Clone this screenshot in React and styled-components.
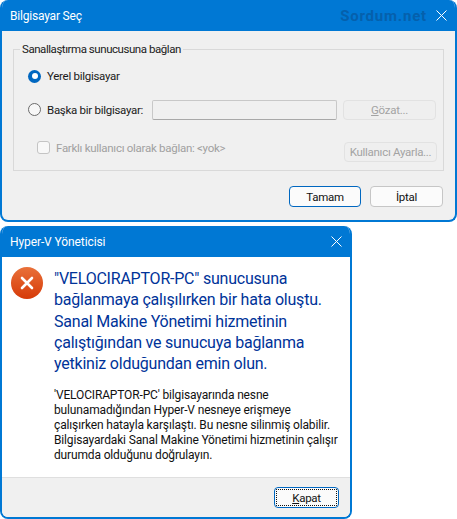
import React from "react";
import styled, { createGlobalStyle } from "styled-components";

const Global = createGlobalStyle`
  html, body { margin: 0; padding: 0; background: #fff; }
  body { font-family: Roboto, "Noto Sans", "Liberation Sans", sans-serif; font-size: 11.5px; letter-spacing: -.28px; }
`;
const Page = styled.div`display:flex;flex-direction:column;align-items:flex-start;width:457px;height:519px;overflow:hidden;`;
const Win = styled.div`
  box-sizing:border-box;width:${p=>p.$w}px;height:${p=>p.$h}px;margin-top:${p=>p.$mt||0}px;
  border:2px solid #0078d4;border-top:0;border-radius:8px 8px 8px 8px;background:${p=>p.$bg||"#f0f0f0"};
  display:flex;flex-direction:column;overflow:hidden;
`;
const Title = styled.div`
  height:31px;flex:none;margin:0 -2px;background:#0078d4;color:#fff;display:flex;align-items:center;
  padding:0 10px;font-size:12px;letter-spacing:${p=>p.$ls}px;
`;
const TitleText = styled.span`flex:1;`;
const Mark = styled.span`font-weight:700;font-size:15px;color:#0560ac;letter-spacing:.8px;margin-right:9px;`;
const Close = styled.svg`width:11px;height:11px;stroke:#fff;stroke-width:1;fill:none;flex:none;`;
const Body1 = styled.div`flex:1;display:flex;flex-direction:column;padding:11px 11px 0 11px;`;
const Group = styled.fieldset`
  box-sizing:border-box;margin:0;padding:0;height:129px;border:1px solid #d9d9d9;position:relative;display:block;
  min-width:0;
`;
const Legend = styled.legend`
  padding:0 2px;margin-left:6px;font-size:11.5px;letter-spacing:-.45px;color:#1a1a1a;line-height:14px;
`;
const Row = styled.div`display:flex;align-items:center;height:${p=>p.$h}px;padding-left:${p=>p.$pl}px;padding-right:6px;margin-top:${p=>p.$mt||0}px;color:${p=>p.$off?"#a0a0a0":"#1a1a1a"};`;
const Radio = styled.span`
  box-sizing:border-box;width:13px;height:13px;border-radius:50%;flex:none;margin-right:6px;display:flex;align-items:center;justify-content:center;
  background:${p=>p.$on?"#0067c0":"#f7f7f7"};border:${p=>p.$on?"0":"1px solid #6b6b6b"};
  &::after{content:"";display:${p=>p.$on?"block":"none"};width:6px;height:6px;border-radius:50%;background:#fff;}
`;
const Check = styled.span`box-sizing:border-box;width:13px;height:13px;border:1px solid #c4c4c4;border-radius:3px;background:#f8f8f8;flex:none;margin-right:6px;`;
const Label = styled.span`flex:${p=>p.$grow?1:"none"};width:${p=>p.$w?p.$w+"px":"auto"};white-space:nowrap;`;
const Field = styled.span`box-sizing:border-box;width:185px;height:20px;border:1px solid #c8c8c8;border-bottom-color:#a8a8a8;border-radius:2px;background:#f0f0f0;flex:none;margin-right:6px;`;
const Btn = styled.span`
  box-sizing:border-box;display:flex;align-items:center;justify-content:center;flex:none;width:${p=>p.$w}px;height:${p=>p.$h||21}px;
  border-radius:4px;
  color:${p=>p.$off?"#a3a3a3":"#111"};background:${p=>p.$off?"#efefef":"#fbfbfb"};
  border:1px solid ${p=>p.$off?"#e2e2e2":p.$pri?"#0067c0":"#c6c6c6"};
  ${p=>p.$pri?"border-width:1.5px;":""}
`;
const LowBtn = styled(Btn)`margin-top:8px;`;
const Foot = styled.div`display:flex;justify-content:flex-end;gap:9px;padding:15px 1px 0 0;`;
const Content = styled.div`flex:1;background:#fff;display:flex;padding:11px 14px 0 9px;`;
const ErrIcon = styled.svg`width:32px;height:32px;flex:none;margin:-1px 11px 0 0;`;
const Texts = styled.div`display:flex;flex-direction:column;`;
const Heading = styled.div`color:#003399;font-size:16px;letter-spacing:-.22px;line-height:21.3px;white-space:pre;`;
const Detail = styled.div`color:#111;font-size:12px;letter-spacing:-.15px;line-height:15px;white-space:pre;margin-top:14px;`;
const Bar = styled.div`box-sizing:border-box;height:40px;flex:none;background:#f0f0f0;border-top:1px solid #dfdfdf;display:flex;justify-content:flex-end;padding:9px 11px 0 0;`;
const FocusBtn = styled(Btn)`
  position:relative;border:1.5px solid #0067c0;
  &::after{content:"";position:absolute;inset:1px;border:1px dotted #111;border-radius:1px;}
`;

const X = () => <Close viewBox="0 0 11 11"><path d="M.5.5l10 10M10.5.5l-10 10"/></Close>;

export default function App() {
  return (
    <Page>
      <Global/>
      <Win $w={457} $h={222}>
        <Title $ls={-0.2}><TitleText>Bilgisayar Seç</TitleText><Mark>Sordum.net</Mark><X/></Title>
        <Body1>
          <Group>
            <Legend>Sanallaştırma sunucusuna bağlan</Legend>
            <Row $h={20} $pl={14} $mt={10}><Radio $on/><Label>Yerel bilgisayar</Label></Row>
            <Row $h={21} $pl={14} $mt={13}><Radio/><Label $w={105}>Başka bir bilgisayar:</Label><Field/><Btn $off $w={93} $h={20}><span><u>G</u>özat...</span></Btn></Row>
            <Row $h={21} $pl={23} $mt={17} $off><Check/><Label $grow>Farklı kullanıcı olarak bağlan: &lt;yok&gt;</Label><LowBtn $off $w={93} $h={20}>Kullanıcı Ayarla...</LowBtn></Row>
          </Group>
          <Foot><Btn $pri $w={72}>Tamam</Btn><Btn $w={73}>İptal</Btn></Foot>
        </Body1>
      </Win>
      <Win $w={352} $h={293} $mt={4} $bg="#fff">
        <Title $ls={-0.1}><TitleText>Hyper-V Yöneticisi</TitleText><X/></Title>
        <Content>
          <ErrIcon viewBox="0 0 32 32">
            <defs><linearGradient id="eg" x1="0" y1="0" x2="0" y2="1"><stop offset="0" stopColor="#e9713a"/><stop offset="1" stopColor="#d63a08"/></linearGradient></defs>
            <circle cx="16" cy="16" r="16" fill="url(#eg)"/>
            <path d="M11 11l10 10M21 11l-10 10" stroke="#fff" strokeWidth="2.6" strokeLinecap="round"/>
          </ErrIcon>
          <Texts>
            <Heading>{`"VELOCIRAPTOR-PC" sunucusuna
bağlanmaya çalışılırken bir hata oluştu.
Sanal Makine Yönetimi hizmetinin
çalıştığından ve sunucuya bağlanma
yetkiniz olduğundan emin olun.`}</Heading>
            <Detail>{`'VELOCIRAPTOR-PC' bilgisayarında nesne
bulunamadığından Hyper-V nesneye erişmeye
çalışırken hatayla karşılaştı. Bu nesne silinmiş olabilir.
Bilgisayardaki Sanal Makine Yönetimi hizmetinin çalışır
durumda olduğunu doğrulayın.`}</Detail>
          </Texts>
        </Content>
        <Bar><FocusBtn $w={65}><span><u>K</u>apat</span></FocusBtn></Bar>
      </Win>
    </Page>
  );
}
